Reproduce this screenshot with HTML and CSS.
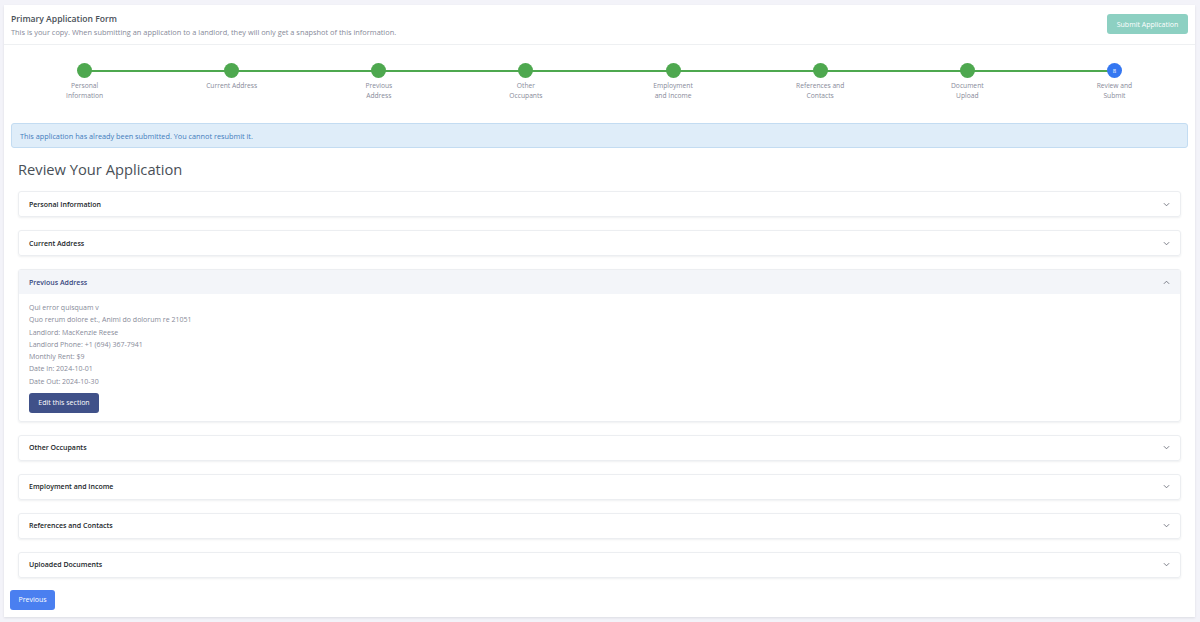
FILE: index.html
```html
<!DOCTYPE html>
<html lang="en">
<head>
    <meta charset="UTF-8">
    <meta name="viewport" content="width=device-width, initial-scale=1.0">
    <title>Primary Application Form</title>
    <link rel="stylesheet" href="styles.css">
</head>
<body>
    <div class="card">
        <div class="card-header">
            <div>
                <h5 class="card-title">Primary Application Form</h5>
                <p class="card-subtitle">This is your copy. When submitting an application to a landlord, they will only get a snapshot of this information.</p>
            </div>
            <button class="btn btn-submit" disabled>Submit Application</button>
        </div>

        <div class="card-body">
            <div class="stepper">
                <div class="step done"><span class="dot"></span><span class="step-label">Personal<br>Information</span></div>
                <div class="step done"><span class="dot"></span><span class="step-label">Current Address</span></div>
                <div class="step done"><span class="dot"></span><span class="step-label">Previous<br>Address</span></div>
                <div class="step done"><span class="dot"></span><span class="step-label">Other<br>Occupants</span></div>
                <div class="step done"><span class="dot"></span><span class="step-label">Employment<br>and Income</span></div>
                <div class="step done"><span class="dot"></span><span class="step-label">References and<br>Contacts</span></div>
                <div class="step done"><span class="dot"></span><span class="step-label">Document<br>Upload</span></div>
                <div class="step active"><span class="dot">8</span><span class="step-label">Review and<br>Submit</span></div>
            </div>

            <div class="alert">This application has already been submitted. You cannot resubmit it.</div>

            <div class="review">
                <h2 class="review-title">Review Your Application</h2>

                <div class="accordion">
                    <div class="acc-item">
                        <div class="acc-header">Personal Information <svg class="chev" viewBox="0 0 8 5"><polyline points="1,1 4,4 7,1"/></svg></div>
                    </div>
                    <div class="acc-item">
                        <div class="acc-header">Current Address <svg class="chev" viewBox="0 0 8 5"><polyline points="1,1 4,4 7,1"/></svg></div>
                    </div>
                    <div class="acc-item open">
                        <div class="acc-header">Previous Address <svg class="chev" viewBox="0 0 8 5"><polyline points="1,4 4,1 7,4"/></svg></div>
                        <div class="acc-body">
                            <p>Qui error quisquam v</p>
                            <p>Quo rerum dolore et., Animi do dolorum re 21051</p>
                            <p>Landlord: MacKenzie Reese</p>
                            <p>Landlord Phone: +1 (694) 367-7941</p>
                            <p>Monthly Rent: $9</p>
                            <p>Date In: 2024-10-01</p>
                            <p>Date Out: 2024-10-30</p>
                            <button class="btn btn-edit">Edit this section</button>
                        </div>
                    </div>
                    <div class="acc-item">
                        <div class="acc-header">Other Occupants <svg class="chev" viewBox="0 0 8 5"><polyline points="1,1 4,4 7,1"/></svg></div>
                    </div>
                    <div class="acc-item">
                        <div class="acc-header">Employment and Income <svg class="chev" viewBox="0 0 8 5"><polyline points="1,1 4,4 7,1"/></svg></div>
                    </div>
                    <div class="acc-item">
                        <div class="acc-header">References and Contacts <svg class="chev" viewBox="0 0 8 5"><polyline points="1,1 4,4 7,1"/></svg></div>
                    </div>
                    <div class="acc-item">
                        <div class="acc-header">Uploaded Documents <svg class="chev" viewBox="0 0 8 5"><polyline points="1,1 4,4 7,1"/></svg></div>
                    </div>
                </div>
            </div>

            <button class="btn btn-prev">Previous</button>
        </div>
    </div>
</body>
</html>
```

FILE: styles.css
```css
/* Reset */
* {
    margin: 0;
    padding: 0;
    box-sizing: border-box;
}

body {
    background-color: #f3f3f9;
    font-family: "Open Sans", Arial, sans-serif;
    color: #495057;
    padding: 5px 5px 5px 4px;
}

.card {
    background-color: white;
    height: 612px;
    box-shadow: 0 1px 2px rgba(56, 65, 74, 0.12);
}

/* Header */
.card-header {
    display: flex;
    justify-content: space-between;
    align-items: flex-start;
    padding: 8px 7px 0 7px;
    height: 40px;
    border-bottom: 1px solid #eef0f2;
}

.card-title {
    font-size: 8.6px;
    font-weight: 600;
    color: #495057;
    line-height: 11px;
    margin-top: 1px;
}

.card-subtitle {
    font-size: 7.4px;
    font-weight: 500;
    color: #878a99;
    margin-top: 2px;
}

.btn {
    border: none;
    border-radius: 3px;
    font-family: inherit;
    color: white;
    cursor: pointer;
}

.btn-submit {
    background-color: #8dd0c2;
    font-size: 7px;
    width: 81px;
    height: 20px;
    margin-top: 1px;
}

/* Body */
.card-body {
    padding: 0 7px 0 7px;
}

.stepper {
    display: grid;
    grid-template-columns: repeat(8, 1fr);
    padding-top: 18px;
    height: 78px;
}

.step {
    position: relative;
    display: flex;
    flex-direction: column;
    align-items: center;
}

/* connector line to the next step */
.step::after {
    content: "";
    position: absolute;
    top: 7px;
    left: 50%;
    width: 100%;
    height: 1.5px;
    background-color: #4ea84f;
}

.step:last-child::after {
    display: none;
}

.dot {
    position: relative;
    z-index: 1;
    width: 15px;
    height: 15px;
    border-radius: 50%;
    background-color: #4ea84f;
    color: white;
    font-size: 6px;
    display: flex;
    align-items: center;
    justify-content: center;
}

.step.active .dot {
    background-color: #3577f1;
}

.step-label {
    margin-top: 3px;
    font-size: 6.7px;
    line-height: 10px;
    color: #878a99;
    text-align: center;
}

.alert {
    background-color: #dfedf9;
    border: 1px solid #c3dcf2;
    border-radius: 3px;
    color: #3f7cbc;
    font-size: 7.3px;
    height: 25px;
    padding: 0 8px;
    display: flex;
    align-items: center;
}

.review {
    padding: 0 7px;
}

.review-title {
    font-size: 14.7px;
    font-weight: 500;
    color: #495057;
    margin-top: 11px;
    height: 32px;
}

.accordion {
    display: flex;
    flex-direction: column;
    gap: 13px;
}

.acc-item {
    border: 1px solid #eceef1;
    border-radius: 3px;
    box-shadow: 0 1px 2px rgba(56, 65, 74, 0.08);
}

.acc-header {
    height: 24px;
    display: flex;
    justify-content: space-between;
    align-items: center;
    padding: 0 10px;
    font-size: 7px;
    font-weight: 600;
    color: #212529;
}

.chev {
    width: 7px;
    height: 5px;
    fill: none;
    stroke: #6a6d78;
    stroke-width: 1;
}

.acc-item.open .acc-header {
    background-color: #f3f5f9;
    color: #37477e;
}

.acc-body {
    padding: 8px 10px 8px 10px;
}

.acc-body p {
    font-size: 7px;
    line-height: 12.3px;
    color: #878a99;
}

.btn-edit {
    background-color: #405189;
    font-size: 7px;
    width: 70px;
    height: 20px;
    margin-top: 4px;
}

.btn-prev {
    background-color: #4a7ff0;
    font-size: 7px;
    width: 45px;
    height: 20px;
    margin-top: 12px;
    margin-left: -1px;
}
```
